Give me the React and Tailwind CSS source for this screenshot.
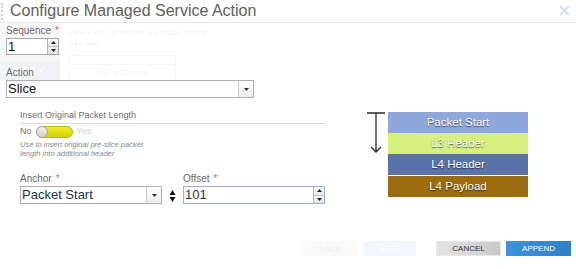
import React from "react";

function Spin({ className = "" }) {
  return (
    <div className={"flex flex-col w-[11px] border-l border-[#b5b5b5] " + className}>
      <div className="flex-1 flex items-center justify-center bg-gradient-to-b from-[#fdfdfd] to-[#e9e9e9] border-b border-[#c4c4c4]">
        <svg width="5" height="3" viewBox="0 0 5 3"><path d="M0 3 L2.5 0 L5 3Z" fill="#222" /></svg>
      </div>
      <div className="flex-1 flex items-center justify-center bg-gradient-to-b from-[#f3f3f3] to-[#e2e2e2]">
        <svg width="5" height="3" viewBox="0 0 5 3"><path d="M0 0 L2.5 3 L5 0Z" fill="#222" /></svg>
      </div>
    </div>
  );
}

function DropBtn() {
  return (
    <div className="w-[15px] flex items-center justify-center border-l border-[#c8c8c8] bg-gradient-to-b from-[#fefefe] to-[#ececec]">
      <svg width="5" height="3" viewBox="0 0 5 3"><path d="M0 0 L2.5 3 L5 0Z" fill="#333" /></svg>
    </div>
  );
}

function Label({ children, req }) {
  return (
    <div className="text-[10px] leading-[12px] text-[#6a6a6a]">
      {children}
      {req && <span className="text-[#e0685a] ml-[4px]">*</span>}
    </div>
  );
}

function Box({ bg, children }) {
  return (
    <div
      className={"h-[21px] flex items-center justify-center text-white text-[11.5px] " + bg}
      style={{ textShadow: "0 1px 1px rgba(0,0,0,0.6)" }}
    >
      {children}
    </div>
  );
}

export default function App() {
  return (
    <div className="relative w-[576px] h-[269px] bg-white overflow-hidden font-['Liberation_Sans',Arial,sans-serif]">
      {/* faint background content showing through */}
      <div className="absolute left-0 top-[23px] w-[60px] h-[40px] bg-[#f7f7f7]" />
      <div className="absolute left-0 top-[62px] w-[60px] h-[18px] bg-[#f0f2f5] text-[10px] leading-[16px] text-white">c Match ✓</div>
      <div className="absolute left-[68px] top-[27px] text-[7.5px] italic text-[#f3f3f3]">Click + and - to include or exclude actions</div>
      <svg className="absolute left-[70px] top-[38px]" width="30" height="12" viewBox="0 0 30 12">
        <path d="M6 0 V12 M0 6 H12 M16 6 H28" stroke="#f1f1f1" strokeWidth="1" />
      </svg>
      <div className="absolute left-[68px] top-[55px] w-[108px] h-[26px] border border-[#f6f6f6]">
        <div className="h-[9px] border-b border-[#f6f6f6]" />
        <div className="text-[10px] text-[#f6f6f6] text-center tracking-wider">No actions</div>
      </div>

      <div className="relative flex flex-col h-full">
        {/* header */}
        <div className="flex items-center h-[23px] border-b border-[#e6e6e6] pr-[6px]">
          <div className="w-[3px] h-[17px] ml-[1px] border-l-2 border-dotted border-[#cfcfcf]" />
          <div className="ml-[6px] text-[16px] leading-[18px] text-[#606060]">Configure Managed Service Action</div>
          <svg className="ml-auto mb-[1px]" width="11" height="11" viewBox="0 0 11 11">
            <path d="M1 1 L10 10 M10 1 L1 10" stroke="#c4ddf3" strokeWidth="1.6" />
          </svg>
        </div>

        {/* body */}
        <div className="px-[6px]">
          <div className="mt-[2px]">
            <Label req>Sequence</Label>
          </div>
          <div className="mt-[1px] w-[53px] h-[17px] border border-[#a8a8a8] flex bg-white">
            <div className="flex-1 pl-[1px] text-[13px] leading-[15px] text-[#111]">1</div>
            <Spin />
          </div>

          <div className="mt-[12px]">
            <Label>Action</Label>
          </div>
          <div className="mt-[1px] w-[248px] h-[18px] border border-[#b0b0b0] flex bg-white">
            <div className="flex-1 pl-[1px] text-[13px] leading-[16px] text-[#111]">Slice</div>
            <DropBtn />
          </div>

          <div className="mt-[12px] flex pl-[14px]">
            <div className="w-[305px]">
              <div className="text-[9px] leading-[11px] text-[#707070] border-b border-[#dcdcdc] pb-[2px]">
                Insert Original Packet Length
              </div>
              <div className="flex items-center h-[13px] mt-[1px]">
                <span className="text-[9px] text-[#777]">No</span>
                <div className="ml-[4px] w-[37px] h-[12px] rounded-full border border-[#bdb600] bg-gradient-to-b from-[#efeb2a] to-[#d9d200] flex items-center">
                  <div className="w-[12px] h-[12px] -ml-[1px] rounded-full border border-[#a8a8a8] bg-gradient-to-b from-[#f4f4f4] to-[#cfcfcf]" />
                </div>
                <span className="ml-[4px] text-[9px] text-[#cfcfcf]">Yes</span>
              </div>
              <div className="mt-[2px] text-[7.5px] leading-[9px] italic text-[#888]">
                Use to insert original pre-slice packet
                <br />
                length into additional header
              </div>

              <div className="mt-[15px] flex">
                <div className="w-[142px]">
                  <Label req>Anchor</Label>
                  <div className="mt-[1px] h-[18px] border border-[#b0b0b0] flex bg-white">
                    <div className="flex-1 pl-[1px] text-[13px] leading-[16px] text-[#1d3447]">Packet Start</div>
                    <DropBtn />
                  </div>
                </div>
                <div className="w-[21px] flex items-end justify-center pb-[1px]">
                  <svg width="7" height="14" viewBox="0 0 7 14">
                    <path d="M0.5 6 L3.5 1 L6.5 6Z" fill="#111" />
                    <path d="M0.5 8 L3.5 13 L6.5 8Z" fill="#111" />
                  </svg>
                </div>
                <div className="w-[142px]">
                  <Label req>Offset</Label>
                  <div className="mt-[1px] h-[18px] border border-[#9fb2cf] flex bg-white">
                    <div className="flex-1 pl-[1px] text-[13px] leading-[16px] text-[#1d3447]">101</div>
                    <Spin />
                  </div>
                </div>
              </div>
            </div>

            <div className="ml-[42px] mt-[2px] flex">
              <svg width="20" height="44" viewBox="0 0 20 44">
                <path d="M0 1 L18 1 M9 1 L9 40 M4 35 L9 40 L14 35" stroke="#2a2a2a" strokeWidth="1.3" fill="none" />
              </svg>
              <div className="ml-[1px] w-[140px] flex flex-col">
                <Box bg="bg-[#8fa8dc]">Packet Start</Box>
                <Box bg="bg-[#d5f07c]">L3 Header</Box>
                <Box bg="bg-[#5a72a8]">L4 Header</Box>
                <div className="h-[1px]" />
                <Box bg="bg-[#9a6b0f]">L4 Payload</Box>
              </div>
            </div>
          </div>
        </div>

        {/* footer */}
        <div className="mt-auto mb-[13px] flex justify-end pr-[5px] text-[8px]">
          <div className="w-[54px] h-[15px] flex items-center justify-center bg-[#fafafa] text-[#f0f0f0]">BACK</div>
          <div className="ml-[6px] w-[53px] h-[15px] flex items-center justify-center bg-[#f1f7fd] text-white">NEXT</div>
          <div className="ml-[20px] w-[65px] h-[15px] flex items-center justify-center bg-gradient-to-r from-[#e2e2e2] via-[#d9d9d9] to-[#c8c8c8] text-[#333] border border-[#e8e8e8]">CANCEL</div>
          <div className="ml-[5px] w-[65px] h-[15px] flex items-center justify-center bg-gradient-to-r from-[#3f93da] to-[#2f80c6] text-white">APPEND</div>
        </div>
      </div>
    </div>
  );
}
